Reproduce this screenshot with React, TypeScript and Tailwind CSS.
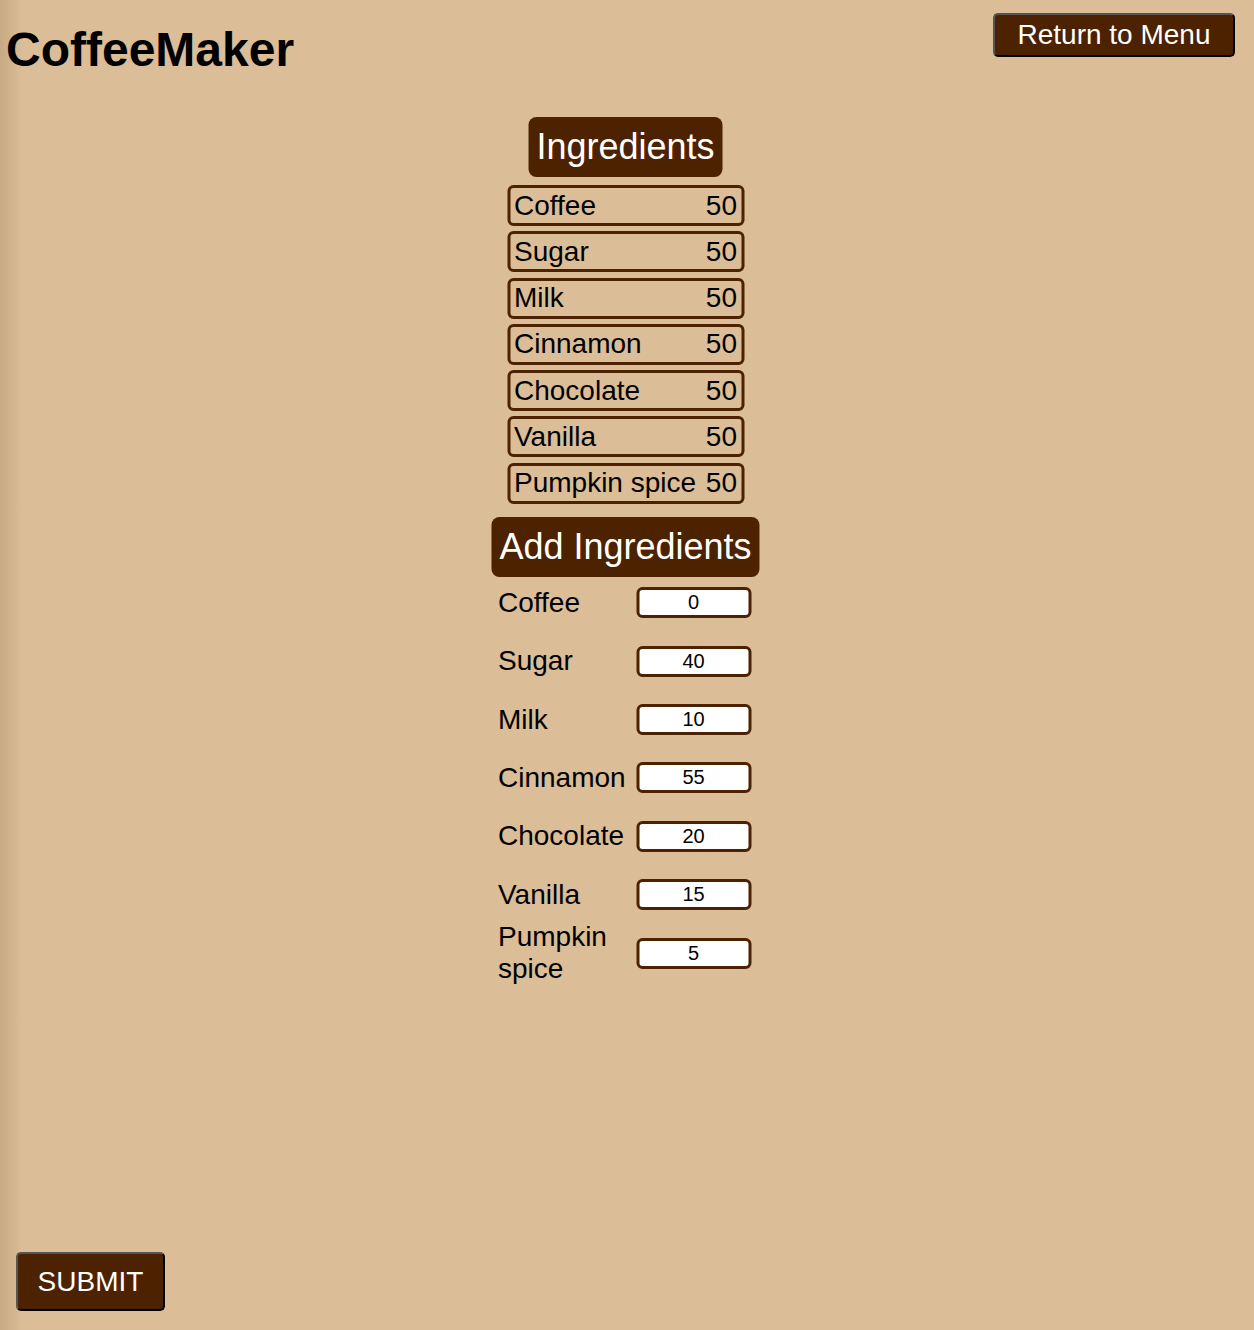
import { useState } from "react";

// ─── Data ─────────────────────────────────────────────────────────────────────

const INVENTORY = [
  { name: "Coffee", amount: 50 },
  { name: "Sugar", amount: 50 },
  { name: "Milk", amount: 50 },
  { name: "Cinnamon", amount: 50 },
  { name: "Chocolate", amount: 50 },
  { name: "Vanilla", amount: 50 },
  { name: "Pumpkin spice", amount: 50 },
];

const INITIAL_ADD: Record<string, string> = {
  Coffee: "0",
  Sugar: "40",
  Milk: "10",
  Cinnamon: "55",
  Chocolate: "20",
  Vanilla: "15",
  "Pumpkin spice": "5",
};

const btn =
  "bg-[#4d2200] text-white text-[28px] leading-[32px] rounded-[5px] border-2 border-solid " +
  "border-t-[#555] border-l-[#555] border-r-black border-b-black cursor-pointer";

// ─── Page ─────────────────────────────────────────────────────────────────────

export default function App() {
  const [adds, setAdds] = useState(INITIAL_ADD);

  return (
    <div
      className="min-h-[1330px] flex flex-col text-black
                 bg-[linear-gradient(to_right,#c7a983,#dbbd97_22px)]
                 font-['Liberation_Sans',Arial,sans-serif]">

      {/* Header */}
      <header className="flex items-start justify-between pl-[6px] pr-[19px]">
        <h1 className="mt-[22px] text-[48px] leading-[55px] font-bold">CoffeeMaker</h1>
        <button className={`${btn} mt-[13px] w-[242px] h-[44px]`}>Return to Menu</button>
      </header>

      <main className="flex-1 flex flex-col items-center mt-[40px] -translate-x-[1.5px]">

        {/* Inventory */}
        <h2 className="bg-[#4d2200] text-white text-[36px] leading-[42px] px-[8px] py-[9px] rounded-lg">
          Ingredients
        </h2>
        <div className="flex flex-col gap-[5.3px] mt-[8px]">
          {INVENTORY.map((item) => (
            <div
              key={item.name}
              className="w-[237px] h-[41px] flex items-center justify-between
                         border-[3px] border-[#4d2200] rounded-md px-[4px] text-[28px] leading-[32px]">
              <span>{item.name}</span>
              <span>{item.amount}</span>
            </div>
          ))}
        </div>

        {/* Add ingredients */}
        <h2 className="mt-[13px] bg-[#4d2200] text-white text-[36px] leading-[42px] px-[8px] py-[9px] rounded-lg">
          Add Ingredients
        </h2>
        <div className="mt-[10px] -ml-[2px] grid grid-cols-[130px_115px] gap-x-[8px] gap-y-[26.4px] auto-rows-[32px] items-center">
          {INVENTORY.map((item) => (
            <div key={item.name} className="contents">
              <label className="text-[28px] leading-[32px]">{item.name}</label>
              <input
                value={adds[item.name]}
                onChange={(e) => setAdds({ ...adds, [item.name]: e.target.value })}
                className="w-[115px] h-[31px] bg-white border-[3px] border-[#4d2200] rounded-md
                           text-center text-[20px] outline-none"
              />
            </div>
          ))}
        </div>
      </main>

      <div className="pl-[16px] pb-[19px]">
        <button className={`${btn} w-[149px] h-[59px]`}>SUBMIT</button>
      </div>
    </div>
  );
}
